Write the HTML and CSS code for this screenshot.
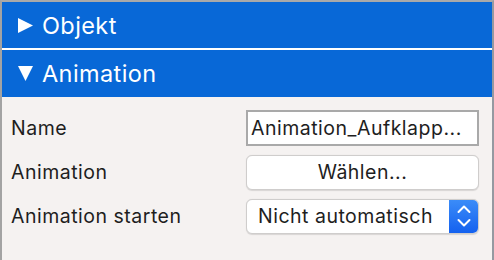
FILE: index.html
```html
<!DOCTYPE html>
<html lang="de">
<head>
<meta charset="utf-8">
<title>Inspector</title>
<link rel="stylesheet" href="styles.css">
</head>
<body>
<div class="panel">
  <div class="section-header header-collapsed">
    <svg class="disclosure" width="15" height="15" viewBox="0 0 15 15"><polygon points="0,0 15,7.5 0,15" fill="#fff"/></svg>
    <span class="header-title">Objekt</span>
  </div>
  <div class="section-header">
    <svg class="disclosure" width="15" height="15" viewBox="0 0 15 15"><polygon points="0,0 15,0 7.5,15" fill="#fff"/></svg>
    <span class="header-title">Animation</span>
  </div>
  <div class="section-body">
    <div class="row">
      <span class="label">Name</span>
      <div class="text-field">Animation_Aufklapp...</div>
    </div>
    <div class="row">
      <span class="label">Animation</span>
      <div class="push-button">Wählen...</div>
    </div>
    <div class="row">
      <span class="label">Animation starten</span>
      <div class="popup">
        <span class="popup-value">Nicht automatisch</span>
        <span class="popup-arrows">
          <svg width="14" height="22" viewBox="0 0 14 22"><polyline points="1.5,7 7,1.5 12.5,7" fill="none" stroke="#fff" stroke-width="2" stroke-linecap="round" stroke-linejoin="round"/><polyline points="1.5,15 7,20.5 12.5,15" fill="none" stroke="#fff" stroke-width="2" stroke-linecap="round" stroke-linejoin="round"/></svg>
        </span>
      </div>
    </div>
  </div>
</div>
</body>
</html>
```
FILE: styles.css
```css
html, body {
  margin: 0;
  padding: 0;
  background: #f5f2f1;
}
.panel {
  height: 258px;
  border-top: 2px solid #a9a9a9;
  border-left: 2px solid #a3a3a3;
  border-right: 2px solid rgba(70, 80, 95, 0.55);
  background: #f5f2f1;
  font-family: Inter, "Noto Sans", "Liberation Sans", sans-serif;
  color: #1e1e1e;
}
.section-header {
  height: 47px;
  background: #0868d7;
  display: flex;
  align-items: center;
  padding-left: 16px;
  gap: 9px;
  color: #fff;
}
.header-collapsed {
  height: 46px;
  border-bottom: 2px solid #fff;
}
.disclosure {
  flex: none;
}
.header-title {
  font-size: 23.5px;
  letter-spacing: 0.4px;
}
.section-body {
  padding: 13px 13px 0 9px;
  display: flex;
  flex-direction: column;
  gap: 8px;
}
.row {
  display: grid;
  grid-template-columns: 235px 233px;
  align-items: center;
  height: 36px;
}
.label {
  font-size: 19.5px;
  letter-spacing: 0.5px;
}
.text-field {
  height: 36px;
  box-sizing: border-box;
  border: 2px solid #a9a9a9;
  background: #fff;
  font-size: 19.5px;
  letter-spacing: 0.5px;
  padding-left: 3px;
  display: flex;
  align-items: center;
  white-space: nowrap;
  overflow: hidden;
}
.push-button {
  height: 35px;
  box-sizing: border-box;
  border: 1px solid #cfcdcc;
  border-radius: 6px;
  background: #fff;
  font-size: 19.5px;
  letter-spacing: 0.5px;
  display: flex;
  align-items: center;
  justify-content: center;
  box-shadow: 0 0.5px 1px rgba(0,0,0,0.12);
}
.popup {
  height: 35px;
  box-sizing: border-box;
  border: 1px solid #cfcdcc;
  border-radius: 6px;
  background: #fff;
  display: flex;
  align-items: stretch;
  overflow: hidden;
  box-shadow: 0 0.5px 1px rgba(0,0,0,0.12);
}
.popup-value {
  flex: 1;
  font-size: 19.5px;
  letter-spacing: 0.5px;
  padding-left: 11px;
  display: flex;
  align-items: center;
  white-space: nowrap;
}
.popup-arrows {
  width: 29px;
  background: linear-gradient(#3b8cf8, #1461ef);
  display: flex;
  align-items: center;
  justify-content: center;
}
```
